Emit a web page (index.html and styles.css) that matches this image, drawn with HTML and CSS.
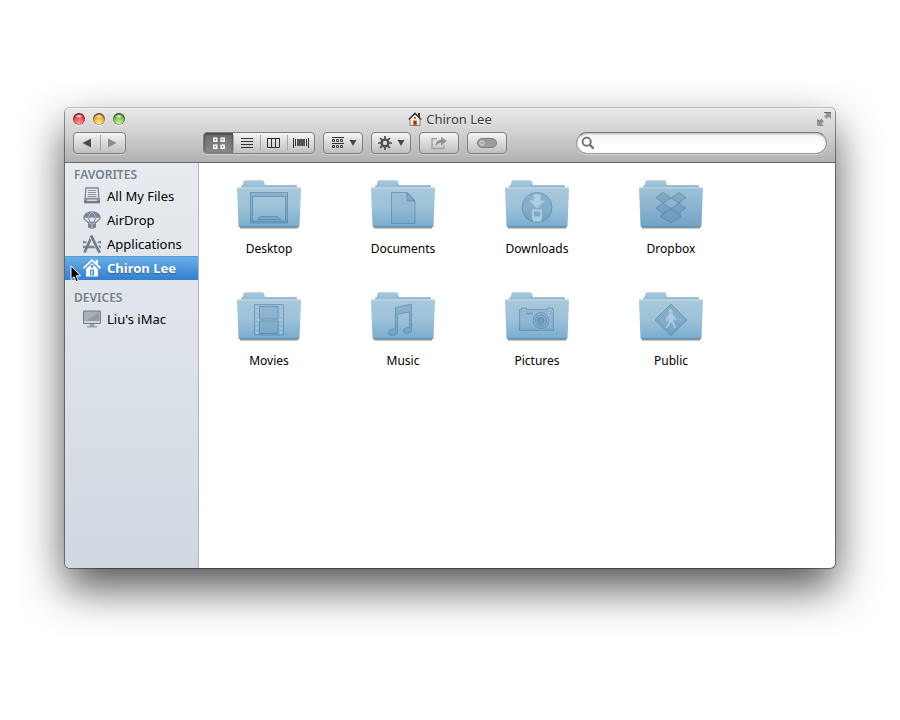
FILE: index.html
```html
<!DOCTYPE html>
<html lang="en">
<head>
<meta charset="utf-8">
<title>Chiron Lee</title>
<link rel="stylesheet" href="styles.css">
</head>
<body>
<svg class="defs" width="0" height="0" aria-hidden="true">
  <defs>
    <linearGradient id="back" x1="0" y1="0" x2="0" y2="1"><stop offset="0" stop-color="#a9cbdf"/><stop offset=".25" stop-color="#86b0cb"/><stop offset="1" stop-color="#6b9dc0"/></linearGradient>
    <linearGradient id="front" x1="0" y1="0" x2="0" y2="1"><stop offset="0" stop-color="#a8c8db"/><stop offset=".5" stop-color="#9dc2d9"/><stop offset="1" stop-color="#7aaccd"/></linearGradient>
    <linearGradient id="front-dark" x1="0" y1="0" x2="0" y2="1"><stop offset="0" stop-color="#9bbed4"/><stop offset="1" stop-color="#6e9fc4"/></linearGradient>
    <linearGradient id="steel" x1="0" y1="0" x2="0" y2="1"><stop offset="0" stop-color="#8d97a4"/><stop offset="1" stop-color="#667282"/></linearGradient>
    <symbol id="folder" viewBox="0 0 64 52">
      <path d="M3 48H61V49.500H3z" fill="#68727a" opacity=".75"/>
      <path d="M4 48V6.500H5.500L6.500 2.500Q7 1.200 8.500 1.200H25Q26.500 1.200 27 2.500L28 6H59Q60 6 60 7V48z" fill="url(#back)"/>
      <path d="M0 9.500Q0 8.500 1 8.500H63Q64 8.500 64 9.500L62.500 47Q62.500 48 61.500 48H2.500Q1.500 48 1.500 47z" fill="url(#front)"/>
      <path d="M.5 9H63.500" stroke="#c8deea"/>
      <path d="M2 47.500H62" stroke="#6093b8"/>
    </symbol>
  </defs>
</svg>
<main class="window">
  <header class="header">
    <div class="titlebar">
      <div class="lights">
        <button class="light red" aria-label="Close"></button>
        <button class="light amber" aria-label="Minimize"></button>
        <button class="light green" aria-label="Zoom"></button>
      </div>
      <h1 class="title">
        <svg width="14" height="14" viewBox="0 0 14 14" aria-hidden="true">
          <path d="M10 1h2v4h-2z" fill="#5e3327"/>
          <path d="M2 7L7 2l5 5v6.500H2z" fill="#f6efe6" stroke="#6c625b" stroke-width=".8"/>
          <path d="M.7 7.500L7 1.200l6.300 6.300" fill="none" stroke="#403632" stroke-width="1.300"/>
          <path d="M5.200 8.500h3.600v5H5.200z" fill="#cf4a18"/><path d="M6.200 9.500h1.300v2H6.200z" fill="#7a1b08"/>
          <path d="M6 5h2v2H6z" fill="#b86b3b"/>
        </svg>
        <span>Chiron Lee</span>
      </h1>
      <button class="fullscreen" aria-label="Full screen">
        <svg width="14" height="14" viewBox="0 0 14 14"><path d="M7 0h7v7l-2.300-2.300-2.200 2.200L7.100 4.500l2.200-2.200zM0 7l2.300 2.300 2.200-2.200 2.400 2.400-2.200 2.200L7 14H0z" fill="#949494"/><path d="M7 .5h7M.5 7.500l1.800 1.800 2.200-2.200" stroke="#6a6a6a" fill="none"/></svg>
      </button>
    </div>
    <div class="toolbar">
      <div class="group nav">
        <button aria-label="Back"><svg width="10" height="10" viewBox="0 0 10 10"><path d="M9 .5v9L.5 5z" fill="#4c4c4c"/></svg></button>
        <button aria-label="Forward"><svg width="10" height="10" viewBox="0 0 10 10"><path d="M1 .5v9L9.500 5z" fill="#8c8c8c"/></svg></button>
      </div>
      <div class="group views">
        <button class="active" aria-label="Icon view"><svg width="12" height="12" viewBox="0 0 12 12"><path d="M.8 1.200h3v3h-3zM8.200 1.200h3v3h-3zM.8 8.200h3v3h-3zM8.200 8.200h3v3h-3z" fill="none" stroke="#fff" stroke-width="1.400"/></svg></button>
        <button aria-label="List view"><svg width="12" height="12" viewBox="0 0 12 12"><path d="M0 1.500h12M0 4.500h12M0 7.500h12M0 10.500h12" stroke="#333"/></svg></button>
        <button aria-label="Column view"><svg width="14" height="12" viewBox="0 0 14 12"><path d="M.5 1.500h12v9H.5zM4.500 1v9M8.500 1v9" fill="none" stroke="#333"/><path d="M0 1.500h13" stroke="#222"/></svg></button>
        <button aria-label="Cover flow"><svg width="16" height="12" viewBox="0 0 16 12"><path d="M4 2h8v7H4z" fill="#555"/><path d="M.5 1v10M2.500 2v7M13.500 2v7M15.500 1v10" stroke="#333"/></svg></button>
      </div>
      <button class="tool" aria-label="Arrange">
        <svg width="12" height="12" viewBox="0 0 12 12"><path d="M0 .5h12M0 6.500h12" stroke="#333"/><path d="M.5 2.500h2v2h-2zM4.500 2.500h2v2h-2zM8.500 2.500h2v2h-2zM.5 8.500h2v2h-2zM4.500 8.500h2v2h-2zM8.500 8.500h2v2h-2z" fill="none" stroke="#444"/></svg>
        <svg width="8" height="6" viewBox="0 0 8 6"><path d="M.5 0h7L4 6z" fill="#484848"/></svg>
      </button>
      <button class="tool action" aria-label="Action">
        <svg width="14" height="14" viewBox="0 0 14 14"><circle cx="7" cy="7" r="3.400" fill="none" stroke="#4c4c4c" stroke-width="2.400"/><path d="M7 0v3M7 11v3M0 7h3M11 7h3M2 2l2.200 2.200M9.800 9.800L12 12M12 2L9.800 4.200M4.200 9.800L2 12" stroke="#4c4c4c" stroke-width="1.700"/></svg>
        <svg width="8" height="6" viewBox="0 0 8 6"><path d="M.5 0h7L4 6z" fill="#484848"/></svg>
      </button>
      <button class="tool single" aria-label="Share">
        <svg width="16" height="14" viewBox="0 0 16 14"><path d="M6 2.800H1V12.500h12V9.500" fill="none" stroke="#a2a2a2" stroke-width="1.500"/><path d="M4.500 10.500C4.500 6 7 4 10 4V.7l5.800 4.400L10 9.500V6.700C7.500 6.700 6 8 4.500 10.500z" fill="#909090"/></svg>
      </button>
      <button class="tool single" aria-label="Tags">
        <svg width="20" height="10" viewBox="0 0 20 10"><rect x=".5" y=".5" width="19" height="9" rx="4.500" fill="#9b9b9b" stroke="#7d7d7d"/><circle cx="5" cy="5" r="2.300" fill="#aaa" stroke="#dcdcdc"/></svg>
      </button>
      <label class="search">
        <svg width="14" height="14" viewBox="0 0 14 14" aria-hidden="true"><circle cx="5.700" cy="5.700" r="4.100" fill="none" stroke="#707070" stroke-width="1.900"/><path d="M9 9l3 3" stroke="#707070" stroke-width="2.400" stroke-linecap="round"/></svg>
        <input type="search" aria-label="Search">
      </label>
    </div>
  </header>
  <div class="body">
    <nav class="sidebar">
      <section>
        <h2>FAVORITES</h2>
        <a href="#files"><svg viewBox="0 0 18 18"><path d="M3 1h12l1 10.500H2z" fill="#e8ebef" stroke="#7c8693" stroke-width="1.300"/><path d="M5 3.500h8M5 5.500h8M4.500 7.500h9M4.500 9.500h9" stroke="#8a94a0"/><path d="M1 11.500h16v4.800H1z" fill="url(#steel)"/><path d="M4 12.500h10v1.500H4z" fill="#d8dce2"/></svg>All My Files</a>
        <a href="#airdrop"><svg viewBox="0 0 18 18"><path d="M0 7.500Q.5 .6 9 .3 17.500.6 18 7.500 15 5.800 12.500 7.500 9 5.500 5.500 7.500 3 5.800 0 7.500z" fill="#7d8895"/><path d="M5.500 7.500Q5.500 3 9 1M12.500 7.500Q12.500 3 9 1" fill="none" stroke="#d5dae0" stroke-width=".6"/><path d="M.5 7.500L7 13M5.500 7.500L8 13M12.500 7.500L10 13M17.500 7.500L11 13" stroke="#7b8592" stroke-width="1.100" fill="none"/><path d="M5 11.500L9 10.500l4 1v5L9 18l-4-1.500z" fill="#7b8592"/><path d="M6 12l3 1.200 3-1.200M9 13v4.500" fill="none" stroke="#c5ccd4" stroke-width=".8"/></svg>AirDrop</a>
        <a href="#apps"><svg viewBox="0 0 18 18"><path d="M0 12h18" stroke="#7a8593" stroke-width="2.600"/><path d="M1.500 17.500L8.500 2" stroke="#6f7b8a" stroke-width="2.600"/><path d="M8 1l8.500 16" stroke="#e3e6eb" stroke-width="4"/><path d="M8 .5l7.500 15 1.500 2" stroke="#6f7b8a" stroke-width="2.700"/><path d="M.5 8.500v-2l3 1.200M17.500 8.500v-2l-3 1.200" fill="none" stroke="#7a8593" stroke-width="1.500"/></svg>Applications</a>
        <a href="#home" class="selected" aria-current="page"><svg viewBox="0 0 18 18"><path d="M12.500 1H15v5l-2.500-2.500z" fill="#fff"/><path d="M.5 9.300L9 1.200l8.500 8.100" fill="none" stroke="#fff" stroke-width="1.700"/><path d="M3 10l6-5.700 6 5.700v7.500H3z" fill="#fff"/><circle cx="9" cy="7.500" r="1.400" fill="#4593dc"/><path d="M7 10.500h4v6H7z" fill="#4593dc"/><path d="M8 11.500h1.500v4H8z" fill="#d6e8fa"/></svg>Chiron Lee</a>
      </section>
      <section>
        <h2>DEVICES</h2>
        <a href="#imac"><svg viewBox="0 0 18 18"><path d="M.5 1h17v12.500H.5z" fill="#a7afb8" stroke="#737e8b"/><path d="M2 2.500h14v8.500H2z" fill="#a9b1ba"/><path d="M2 11L16 2.500V11z" fill="#939ca8"/><path d="M1 12h16" stroke="#dce0e4" stroke-width="1.500"/><path d="M7 14h4l.5 2H14v1.500H4V16h2.500z" fill="#98a1ab"/></svg>Liu's iMac</a>
      </section>
      <svg class="pointer" width="12" height="18" viewBox="0 0 12 18" aria-hidden="true"><path d="M1 .8v13.700l3-2.800 2.100 5 2.300-1-2.100-4.900h4.200z" fill="#000" stroke="#fff" stroke-width="1"/></svg>
    </nav>
    <div class="files">
      <figure><svg viewBox="0 0 64 52"><use href="#folder"/><g class="mark"><path class="strong" fill-rule="evenodd" d="M13.500 13.500h37v30.500h-37zM15.500 17.500v24.500h33v-24.500z"/><path class="strong" d="M20.500 40.500l3-3h17l3 3z"/><path d="M16 15.500h1M47 15.500h1" stroke="#b9d5e5"/></g></svg><figcaption>Desktop</figcaption></figure>
      <figure><svg viewBox="0 0 64 52"><use href="#folder"/><g class="mark"><path d="M20.500 13.500h15.500l8 8.500v22.500h-23.500z"/><path class="strong" d="M36 13.500v8.500h8z"/></g></svg><figcaption>Documents</figcaption></figure>
      <figure><svg viewBox="0 0 64 52"><use href="#folder"/><g class="mark"><circle class="strong" cx="32" cy="28.500" r="15"/><path class="light-mark" d="M28.500 15h7v6.500H40l-8 8-8-8h4.500z"/><path class="light-mark" fill-rule="evenodd" d="M27 30.500h10v9l-1 1v2h-8v-2l-1-1zM29 32.500v5h6v-5z"/></g></svg><figcaption>Downloads</figcaption></figure>
      <figure><svg viewBox="0 0 64 52"><use href="#folder"/><path d="M.5 9.500H63.500L62 47H2z" fill="url(#front-dark)" opacity=".75"/><g class="mark"><path class="strong" d="M24 13.500l8 5.500-8 5-7-5.500zM40 13.500l-8 5.500 8 5 7-5.500zM17 29l7-5 8 5.500-8 5zM47 29l-7-5-8 5.500 8 5zM22 36l2-.5 8-5 8 5 2 .5v2l-10 5.500-10-5.500z"/></g></svg><figcaption>Dropbox</figcaption></figure>
      <figure><svg viewBox="0 0 64 52"><use href="#folder"/><g class="mark"><path d="M17.500 13.500h29v30.500h-29z"/><path d="M22.500 15.500h18.500v12.500h-18.500zM22.500 30h18.500v12.500h-18.500z"/></g><path d="M20 14.500v29M44 14.500v29" stroke="#a3c7dc" stroke-width="3" stroke-dasharray="2.600 1.700"/></svg><figcaption>Movies</figcaption></figure>
      <figure><svg viewBox="0 0 64 52"><use href="#folder"/><g class="mark"><path class="strong" d="M24.500 16.500l16-3.500v26c0 3.500-8 5-8 .8 0-3 3.500-4 6-3V21l-12 2.500v17c0 4.500-9 5.800-9 1 0-3.500 4-4.500 7-3z"/></g></svg><figcaption>Music</figcaption></figure>
      <figure><svg viewBox="0 0 64 52"><use href="#folder"/><g class="mark"><path d="M14.500 18.500h2v-1.500h5v1.500h21v-1.500h5v1.500h1v21h-34z"/><path d="M16 20.500h31v17.500H16z" fill="none" stroke-opacity=".25"/><path d="M21 22.500h7" stroke-width="1.500"/><circle cx="36" cy="29.500" r="8"/><circle cx="36" cy="29.500" r="5.500"/><circle class="strong" cx="36" cy="29.500" r="3"/><path d="M45 22.500h1"/></g></svg><figcaption>Pictures</figcaption></figure>
      <figure><svg viewBox="0 0 64 52"><use href="#folder"/><g class="mark"><path class="strong" d="M32 13l16 16-16 15.500-16-15.500z"/><path d="M32 15.500l13.500 13.500-13.500 13-13.500-13z" fill="none" stroke-opacity=".3"/></g><g fill="#adcee2" stroke="#adcee2"><circle cx="31.500" cy="20" r="1.500"/><path d="M32 23v7l3 3 1 4M31 29l-1 4-3 4M32 24l-4 3v3M32 24l3 2 1 3" fill="none" stroke-width="1.700"/><path d="M30 23h3.500l.5 7h-4z"/></g></svg><figcaption>Public</figcaption></figure>
    </div>
  </div>
</main>
</body>
</html>
```
FILE: styles.css
```css
* { box-sizing: border-box; }

body {
  margin: 0;
  min-height: 100vh;
  padding: 108px 65px 152px;
  display: flex;
  background: #fff;
  color: #000;
  font: 13px/20px "Lucida Grande", "Noto Sans", sans-serif;
}

.defs { position: absolute; }
svg { display: block; flex: none; }
button { padding: 0; border: 0; background: none; font: inherit; }

.window {
  flex: 1;
  min-width: 0;
  display: flex;
  flex-direction: column;
  border-radius: 5px;
  background: #fff;
  box-shadow: 0 0 0 1px rgba(0, 0, 0, .4), 0 20px 44px rgba(0, 0, 0, .68);
}

.header {
  padding-bottom: 8px;
  border-bottom: 1px solid #686868;
  border-radius: 5px 5px 0 0;
  background: linear-gradient(#e8e8e8, #d2d2d2 45%, #b1b1b1);
  box-shadow: 0 -1px 0 #bbb, inset 0 1px 0 #f3f3f3;
}

.titlebar {
  height: 24px;
  padding: 0 4px;
  display: grid;
  grid-template-columns: 1fr auto 1fr;
}

.lights { display: flex; gap: 8px; padding: 5px 0 0 4px; }

.light {
  width: 12px;
  height: 12px;
  border-radius: 50%;
  box-shadow: inset 0 1px 2px rgba(0, 0, 0, .65), inset 0 0 1px rgba(0, 0, 0, .7), 0 1px 0 #f4f4f4;
}
.red { background: radial-gradient(ellipse 4px 2px at 50% 26%, #fff, transparent), radial-gradient(circle at 50% 85%, #ffa4a0, #f04c4c 50%, #a9292c); }
.amber { background: radial-gradient(ellipse 4px 2px at 50% 26%, #fff, transparent), radial-gradient(circle at 50% 85%, #ffec8c, #f1ad40 50%, #a86618); }
.green { background: radial-gradient(ellipse 4px 2px at 50% 26%, #fff, transparent), radial-gradient(circle at 50% 85%, #d0f5a0, #80c05c 50%, #3e7c2c); }

.title {
  margin: 0;
  height: 22px;
  display: flex;
  align-items: center;
  gap: 4px;
  color: #3b3b3b;
  font-size: 13px;
  font-weight: 400;
  text-shadow: 0 1px 0 rgba(255, 255, 255, .6);
}

.fullscreen { justify-self: end; align-self: start; margin-top: 4px; }

.toolbar { display: flex; gap: 8px; padding: 0 8px; }

.group, .tool {
  height: 22px;
  display: flex;
  border: 1px solid #7f7f7f;
  border-radius: 4px;
  background: linear-gradient(#f3f3f3, #dadada 50%, #bfbfbf);
  box-shadow: 0 1px 0 rgba(255, 255, 255, .35);
}
.group button {
  position: relative;
  width: 27px;
  display: grid;
  place-items: center;
}
.group button + button::before {
  content: "";
  position: absolute;
  left: 0;
  top: 2px;
  bottom: 2px;
  width: 1px;
  background: #a5a5a5;
}
.nav { width: 53px; margin-right: 69px; }
.views { width: 112px; }
.views .active {
  width: 29px;
  border-radius: 3px 0 0 3px;
  background: linear-gradient(#6c6c6c, #8a8a8a);
  box-shadow: inset 0 1px 3px rgba(0, 0, 0, .5);
}

.tool { width: 40px; align-items: center; justify-content: space-between; padding: 0 5px 0 8px; }
.tool.action { padding-left: 6px; }
.tool.single { justify-content: center; padding: 0; }

.search {
  flex: 0 1 251px;
  margin-left: auto;
  height: 22px;
  display: flex;
  align-items: center;
  gap: 4px;
  padding: 0 8px 0 4px;
  border: 1px solid #999;
  border-top-color: #777;
  border-radius: 11px;
  background: linear-gradient(#f5f5f5, #fff 70%);
  box-shadow: inset 0 1px 2px rgba(0, 0, 0, .25), 0 1px 0 rgba(255, 255, 255, .4);
}
.search input { flex: 1; min-width: 0; padding: 0; border: 0; outline: 0; background: none; font: inherit; }

.body { flex: 1; display: flex; }

.sidebar {
  position: relative;
  flex: none;
  width: 134px;
  display: flex;
  flex-direction: column;
  gap: 6px;
  border-right: 1px solid #b5b5b5;
  border-bottom-left-radius: 5px;
  background: linear-gradient(#e7ebf0, #d0d8e1);
}
.sidebar h2 {
  margin: 0;
  padding: 2px 9px 0;
  height: 21px;
  color: #717e8b;
  font-size: 12px;
  font-weight: 600;
  line-height: 20px;
  text-shadow: 0 1px 0 rgba(255, 255, 255, .6);
}
.sidebar a {
  height: 24px;
  padding-left: 18px;
  display: flex;
  align-items: center;
  gap: 6px;
  color: #000;
  text-decoration: none;
  white-space: nowrap;
}
.sidebar a svg { width: 18px; height: 18px; }
.sidebar .selected {
  background: linear-gradient(#6bafe6, #3380d0);
  box-shadow: inset 0 1px 0 #589bd4;
  color: #fff;
  font-weight: 700;
  text-shadow: 0 1px 1px rgba(0, 0, 0, .35);
}
.pointer { position: absolute; left: 5px; top: 102px; }

.files {
  flex: 1;
  display: grid;
  grid-template-columns: repeat(auto-fill, 134px);
  grid-auto-rows: 112px;
  align-content: start;
  padding: 16px 0 0 3px;
}
.files figure { margin: 0; text-align: center; }
.files figure > svg { width: 64px; height: 52px; margin: 0 auto 8px; }
.files figcaption { font-size: 12px; line-height: 20px; }
.mark { fill: rgba(72, 122, 162, .1); stroke: rgba(62, 112, 152, .45); }
.mark .strong { fill: rgba(72, 122, 162, .28); }
.mark .light-mark { fill: #adcde0; stroke: none; }
```
